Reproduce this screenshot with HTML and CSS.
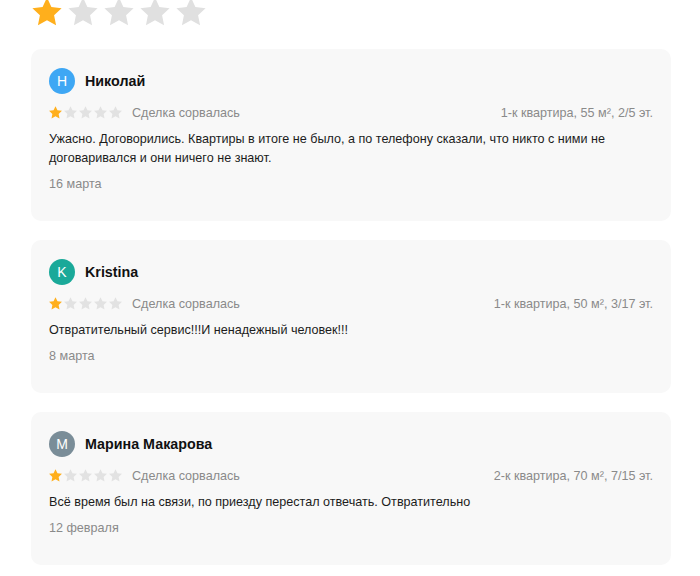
FILE: index.html
```html
<!DOCTYPE html>
<html lang="ru">
<head>
<meta charset="utf-8">
<link rel="stylesheet" href="styles.css">
</head>
<body>
<div class="page">
  <div class="rating-big">
    <svg class="big-star on" viewBox="0 0 24 24"><path d="M12 1.8l3.1 6.6 7.2.9-5.3 5 1.4 7.1L12 17.9l-6.4 3.5L7 14.3l-5.3-5 7.2-.9z"/></svg>
    <svg class="big-star" viewBox="0 0 24 24"><path d="M12 1.8l3.1 6.6 7.2.9-5.3 5 1.4 7.1L12 17.9l-6.4 3.5L7 14.3l-5.3-5 7.2-.9z"/></svg>
    <svg class="big-star" viewBox="0 0 24 24"><path d="M12 1.8l3.1 6.6 7.2.9-5.3 5 1.4 7.1L12 17.9l-6.4 3.5L7 14.3l-5.3-5 7.2-.9z"/></svg>
    <svg class="big-star" viewBox="0 0 24 24"><path d="M12 1.8l3.1 6.6 7.2.9-5.3 5 1.4 7.1L12 17.9l-6.4 3.5L7 14.3l-5.3-5 7.2-.9z"/></svg>
    <svg class="big-star" viewBox="0 0 24 24"><path d="M12 1.8l3.1 6.6 7.2.9-5.3 5 1.4 7.1L12 17.9l-6.4 3.5L7 14.3l-5.3-5 7.2-.9z"/></svg>
  </div>

  <div class="reviews">
    <div class="card">
      <div class="head">
        <div class="avatar av-blue">Н</div>
        <div class="name">Николай</div>
      </div>
      <div class="meta">
        <div class="stars">
          <svg class="s on" viewBox="0 0 24 24"><path d="M12 1.8l3.1 6.6 7.2.9-5.3 5 1.4 7.1L12 17.9l-6.4 3.5L7 14.3l-5.3-5 7.2-.9z"/></svg>
          <svg class="s" viewBox="0 0 24 24"><path d="M12 1.8l3.1 6.6 7.2.9-5.3 5 1.4 7.1L12 17.9l-6.4 3.5L7 14.3l-5.3-5 7.2-.9z"/></svg>
          <svg class="s" viewBox="0 0 24 24"><path d="M12 1.8l3.1 6.6 7.2.9-5.3 5 1.4 7.1L12 17.9l-6.4 3.5L7 14.3l-5.3-5 7.2-.9z"/></svg>
          <svg class="s" viewBox="0 0 24 24"><path d="M12 1.8l3.1 6.6 7.2.9-5.3 5 1.4 7.1L12 17.9l-6.4 3.5L7 14.3l-5.3-5 7.2-.9z"/></svg>
          <svg class="s" viewBox="0 0 24 24"><path d="M12 1.8l3.1 6.6 7.2.9-5.3 5 1.4 7.1L12 17.9l-6.4 3.5L7 14.3l-5.3-5 7.2-.9z"/></svg>
        </div>
        <div class="status">Сделка сорвалась</div>
        <div class="object">1-к квартира, 55 м², 2/5 эт.</div>
      </div>
      <p class="text">Ужасно. Договорились. Квартиры в итоге не было, а по телефону сказали, что никто с ними не договаривался и они ничего не знают.</p>
      <div class="date">16 марта</div>
    </div>

    <div class="card">
      <div class="head">
        <div class="avatar av-teal">K</div>
        <div class="name">Kristina</div>
      </div>
      <div class="meta">
        <div class="stars">
          <svg class="s on" viewBox="0 0 24 24"><path d="M12 1.8l3.1 6.6 7.2.9-5.3 5 1.4 7.1L12 17.9l-6.4 3.5L7 14.3l-5.3-5 7.2-.9z"/></svg>
          <svg class="s" viewBox="0 0 24 24"><path d="M12 1.8l3.1 6.6 7.2.9-5.3 5 1.4 7.1L12 17.9l-6.4 3.5L7 14.3l-5.3-5 7.2-.9z"/></svg>
          <svg class="s" viewBox="0 0 24 24"><path d="M12 1.8l3.1 6.6 7.2.9-5.3 5 1.4 7.1L12 17.9l-6.4 3.5L7 14.3l-5.3-5 7.2-.9z"/></svg>
          <svg class="s" viewBox="0 0 24 24"><path d="M12 1.8l3.1 6.6 7.2.9-5.3 5 1.4 7.1L12 17.9l-6.4 3.5L7 14.3l-5.3-5 7.2-.9z"/></svg>
          <svg class="s" viewBox="0 0 24 24"><path d="M12 1.8l3.1 6.6 7.2.9-5.3 5 1.4 7.1L12 17.9l-6.4 3.5L7 14.3l-5.3-5 7.2-.9z"/></svg>
        </div>
        <div class="status">Сделка сорвалась</div>
        <div class="object">1-к квартира, 50 м², 3/17 эт.</div>
      </div>
      <p class="text">Отвратительный сервис!!!И ненадежный человек!!!</p>
      <div class="date">8 марта</div>
    </div>

    <div class="card">
      <div class="head">
        <div class="avatar av-gray">М</div>
        <div class="name">Марина Макарова</div>
      </div>
      <div class="meta">
        <div class="stars">
          <svg class="s on" viewBox="0 0 24 24"><path d="M12 1.8l3.1 6.6 7.2.9-5.3 5 1.4 7.1L12 17.9l-6.4 3.5L7 14.3l-5.3-5 7.2-.9z"/></svg>
          <svg class="s" viewBox="0 0 24 24"><path d="M12 1.8l3.1 6.6 7.2.9-5.3 5 1.4 7.1L12 17.9l-6.4 3.5L7 14.3l-5.3-5 7.2-.9z"/></svg>
          <svg class="s" viewBox="0 0 24 24"><path d="M12 1.8l3.1 6.6 7.2.9-5.3 5 1.4 7.1L12 17.9l-6.4 3.5L7 14.3l-5.3-5 7.2-.9z"/></svg>
          <svg class="s" viewBox="0 0 24 24"><path d="M12 1.8l3.1 6.6 7.2.9-5.3 5 1.4 7.1L12 17.9l-6.4 3.5L7 14.3l-5.3-5 7.2-.9z"/></svg>
          <svg class="s" viewBox="0 0 24 24"><path d="M12 1.8l3.1 6.6 7.2.9-5.3 5 1.4 7.1L12 17.9l-6.4 3.5L7 14.3l-5.3-5 7.2-.9z"/></svg>
        </div>
        <div class="status">Сделка сорвалась</div>
        <div class="object">2-к квартира, 70 м², 7/15 эт.</div>
      </div>
      <p class="text">Всё время был на связи, по приезду перестал отвечать. Отвратительно</p>
      <div class="date">12 февраля</div>
    </div>
  </div>
</div>
</body>
</html>
```

FILE: styles.css
```css
html, body {
  margin: 0;
  padding: 0;
  background: #fff;
}
body {
  font-family: "Liberation Sans", Arial, sans-serif;
  color: #222;
  font-size: 12.6px;
}
.page {
  padding: 0 29px 0 31px;
}
.rating-big {
  display: flex;
  gap: 2px;
  margin-top: -5px;
  margin-left: -1px;
  height: 31px;
  overflow: hidden;
}
.big-star {
  width: 34px;
  height: 34px;
  fill: #e0e0e0;
  flex: none;
}
.big-star.on { fill: #ffaf1c; }

.reviews {
  display: flex;
  flex-direction: column;
  gap: 19px;
  margin-top: 23px;
}
.card {
  background: #f8f8f8;
  border-radius: 10px;
  padding: 18px 18px 27px;
}
.head {
  display: flex;
  align-items: center;
  gap: 10px;
  height: 28px;
}
.avatar {
  width: 26px;
  height: 26px;
  border-radius: 50%;
  color: #fff;
  font-size: 14px;
  display: flex;
  align-items: center;
  justify-content: center;
  flex: none;
}
.av-blue { background: #3ea7f4; }
.av-teal { background: #1aa999; }
.av-gray { background: #7a8d98; }
.name {
  font-size: 14.3px;
  font-weight: bold;
  color: #111;
}
.meta {
  display: flex;
  align-items: center;
  margin-top: 8px;
  height: 19px;
  color: #8a8a8a;
}
.stars {
  display: flex;
  margin-left: -1px;
  margin-right: 9px;
}
.s {
  width: 15px;
  height: 15px;
  fill: #e2e2e2;
}
.s.on { fill: #ffaf1c; }
.status { flex: 1; }
.object { text-align: right; }
.text {
  margin: 8px 0 0;
  line-height: 19px;
  color: #1c1c1c;
}
.date {
  margin-top: 7px;
  line-height: 19px;
  color: #8a8a8a;
}
```
